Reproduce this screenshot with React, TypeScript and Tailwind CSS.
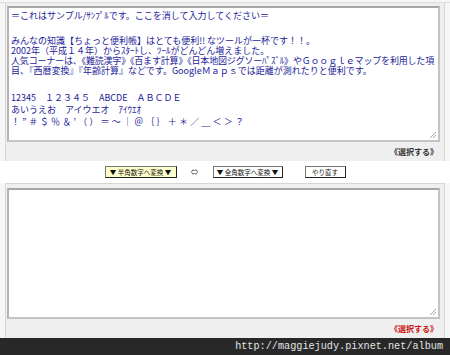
import React from "react";

const jp = { fontFamily: '"Noto Sans CJK JP", "Noto Sans", sans-serif' };

function Grip() {
  return (
    <svg width="9" height="9" viewBox="0 0 9 9" className="absolute right-[1px] bottom-[1px]">
      <line x1="8" y1="2" x2="2" y2="8" stroke="#a8a8a8" strokeWidth="1" />
      <line x1="8" y1="5" x2="5" y2="8" stroke="#a8a8a8" strokeWidth="1" />
    </svg>
  );
}

function Area({ h, children }: { h: string; children?: React.ReactNode }) {
  return (
    <div
      className={`relative ml-[1px] mr-[4px] ${h} bg-white border-2 border-t-[#a6a6a6] border-l-[#b4b4b4] border-r-[#c4c4c4] border-b-[#c4c4c4]`}
    >
      {children}
      <Grip />
    </div>
  );
}

export default function App() {
  const line = "whitespace-pre h-[10px] leading-[10px]";
  return (
    <div className="w-[450px] h-[355px] bg-[#f6f6f6] flex flex-col overflow-hidden" style={jp}>
      <div className="h-[3px] border-b border-[#dedede]" />
      {/* Panel 1 */}
      <div className="mx-[5px] h-[158px] bg-[#efefef] border-x border-[#d6d6d6] pt-[3px] flex flex-col">
        <Area h="h-[136px]">
          <div className="pl-[2px] pt-[3px] text-[9px] text-[#1d1d98]">
            <div className={line}>＝これはサンプル/ｻﾝﾌﾟﾙです。ここを消して入力してください＝</div>
            <div className="h-[15px]" />
            <div className={line}>みんなの知識【ちょっと便利帳】はとても便利!! なツールが一杯です！！。</div>
            <div className={line}>2002年（平成１４年）からｽﾀｰﾄし、ﾂｰﾙがどんどん増えました。</div>
            <div className={`${line} tracking-[-0.18px]`}>人気コーナーは、《難読漢字》《百ます計算》《日本地図ジグソーﾊﾟｽﾞﾙ》やＧｏｏｇｌｅマップを利用した項</div>
            <div className={line}>目、『西暦変換』『年齢計算』などです。GoogleＭａｐｓでは距離が測れたりと便利です。</div>
            <div className="h-[16px]" />
            <div className="whitespace-pre h-[12px] leading-[12px]">12345　１２３４５　ABCDE　ＡＢＣＤＥ</div>
            <div className="whitespace-pre h-[12px] leading-[12px]">あいうえお　アイウエオ　ｱｲｳｴｵ</div>
            <div className="whitespace-pre h-[12px] leading-[12px] tracking-[2.2px]">！”＃＄％＆’（）＝～｜＠｛｝＋＊／＿＜＞？</div>
          </div>
        </Area>
        <div className="flex-1 flex items-center justify-end pr-[6px]">
          <span className="text-[8px] font-bold text-[#333]">《選択する》</span>
        </div>
      </div>
      {/* Button band */}
      <div className="h-[22px] bg-white flex items-center justify-center">
        <button className="w-[72px] h-[12px] bg-[#ffffcc] border border-[#777] border-r-[#222] border-b-[#222] text-[6.5px] leading-[10px] text-[#111] whitespace-pre">
          ▼ 半角数字へ変換 ▼
        </button>
        <span className="mx-[14px] text-[8px] text-[#555] leading-none">⇔</span>
        <button className="w-[70px] h-[12px] bg-white border border-[#777] border-r-[#222] border-b-[#222] text-[6.5px] leading-[10px] text-[#111] whitespace-pre">
          ▼ 全角数字へ変換 ▼
        </button>
        <button className="ml-[22px] w-[41px] h-[12px] bg-white border border-[#777] border-r-[#222] border-b-[#222] text-[6.5px] leading-[10px] text-[#111]">
          やり直す
        </button>
      </div>
      {/* Panel 2 */}
      <div className="mx-[5px] h-[155px] bg-[#efefef] border-x border-t border-[#d6d6d6] pt-[4px] flex flex-col">
        <Area h="h-[131px]" />
        <div className="flex-1 flex items-center justify-end pr-[6px]">
          <span className="text-[8px] font-bold text-[#cc1111]">《選択する》</span>
        </div>
      </div>
      <div className="flex-1 bg-[#282828] flex items-center justify-end pr-[7px]">
        <span className="text-[10.2px] text-[#e4e4e4]" style={{ fontFamily: '"Liberation Mono", monospace' }}>
          http://maggiejudy.pixnet.net/album
        </span>
      </div>
    </div>
  );
}
